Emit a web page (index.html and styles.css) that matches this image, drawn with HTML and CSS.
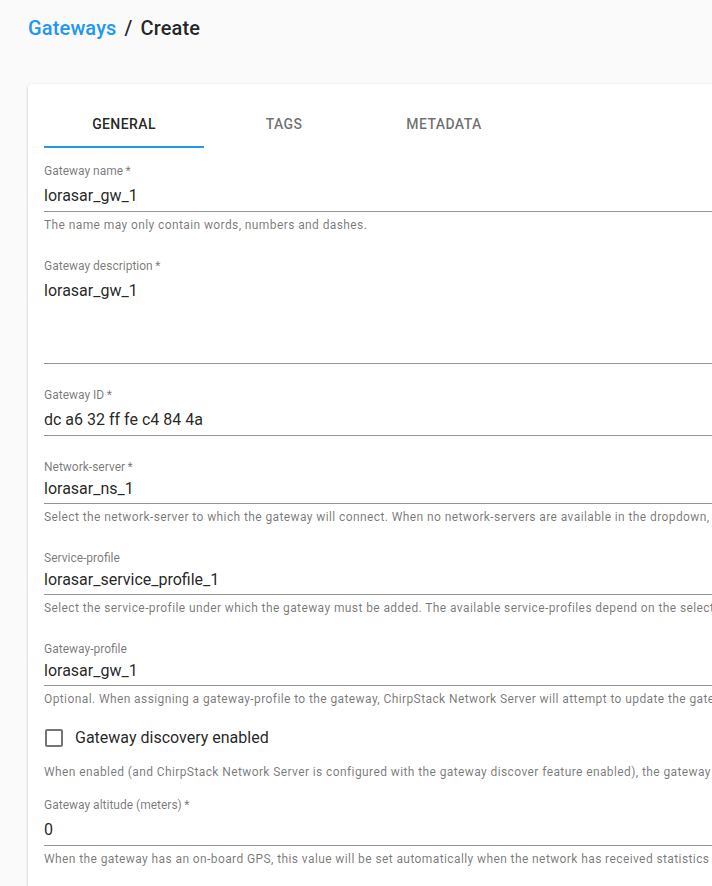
FILE: index.html
```html
<!DOCTYPE html>
<html lang="en">
<head>
<meta charset="utf-8">
<title>Gateways / Create</title>
<link rel="stylesheet" href="styles.css">
</head>
<body>
<div class="page">
  <h1 class="crumbs"><a class="crumb-link" href="#">Gateways</a><span class="sep">/</span><span>Create</span></h1>
  <div class="card">
    <div class="tabs">
      <div class="tab active">General</div>
      <div class="tab">Tags</div>
      <div class="tab">Metadata</div>
    </div>
    <form class="form">
      <div class="field">
        <label class="label">Gateway name&thinsp;*</label>
        <div class="input">lorasar_gw_1</div>
        <p class="helper">The name may only contain words, numbers and dashes.</p>
      </div>
      <div class="field">
        <label class="label">Gateway description&thinsp;*</label>
        <div class="input multi">lorasar_gw_1</div>
      </div>
      <div class="field">
        <label class="label">Gateway ID&thinsp;*</label>
        <div class="input">dc a6 32 ff fe c4 84 4a</div>
      </div>
      <div class="field">
        <label class="label">Network-server&thinsp;*</label>
        <div class="input select">lorasar_ns_1</div>
        <p class="helper">Select the network-server to which the gateway will connect. When no network-servers are available in the dropdown, make sure a service-profile exists for this organization.</p>
      </div>
      <div class="field">
        <label class="label">Service-profile</label>
        <div class="input select">lorasar_service_profile_1</div>
        <p class="helper">Select the service-profile under which the gateway must be added. The available service-profiles depend on the selected network-server, which must be selected first.</p>
      </div>
      <div class="field">
        <label class="label">Gateway-profile</label>
        <div class="input select">lorasar_gw_1</div>
        <p class="helper">Optional. When assigning a gateway-profile to the gateway, ChirpStack Network Server will attempt to update the gateway according to the gateway-profile. Note that this does require a gateway with ChirpStack Concentratord.</p>
      </div>
      <div class="check-group">
        <label class="check-row">
          <span class="check-icon"><svg viewBox="0 0 24 24" width="24" height="24"><path d="M19 5v14H5V5h14m0-2H5c-1.11 0-2 .9-2 2v14c0 1.1.89 2 2 2h14c1.1 0 2-.9 2-2V5c0-1.1-.9-2-2-2z"/></svg></span>
          <span class="check-label">Gateway discovery enabled</span>
        </label>
        <p class="helper">When enabled (and ChirpStack Network Server is configured with the gateway discover feature enabled), the gateway will send out periodical pings to test its coverage by other gateways in the same network.</p>
      </div>
      <div class="field">
        <label class="label">Gateway altitude (meters)&thinsp;*</label>
        <div class="input">0</div>
        <p class="helper">When the gateway has an on-board GPS, this value will be set automatically when the network has received statistics from the gateway.</p>
      </div>
    </form>
  </div>
</div>
</body>
</html>
```
FILE: styles.css
```css
html, body {
  margin: 0;
  padding: 0;
  overflow: hidden;
  background: #fafafa;
}
body {
  font-family: Roboto, "Noto Sans", sans-serif;
  color: rgba(0, 0, 0, 0.87);
}
.page {
  padding: 12px 0 0 28px;
}
.crumbs {
  margin: 0;
  font-size: 20px;
  font-weight: 500;
  line-height: 32px;
  letter-spacing: 0.0075em;
  color: rgba(0, 0, 0, 0.87);
}
.crumb-link {
  color: #2196f3;
  text-decoration: none;
}
.sep {
  margin: 0 8px;
}
.card {
  margin-top: 40px;
  width: 1100px;
  background: #fff;
  border-radius: 4px;
  box-shadow: 0 1px 3px 0 rgba(0,0,0,0.2), 0 1px 1px 0 rgba(0,0,0,0.14), 0 2px 1px -1px rgba(0,0,0,0.12);
  padding: 16px;
}
.tabs {
  display: flex;
  height: 48px;
}
.tab {
  width: 160px;
  display: flex;
  align-items: center;
  justify-content: center;
  font-size: 14px;
  font-weight: 500;
  letter-spacing: 0.02857em;
  text-transform: uppercase;
  color: rgba(0, 0, 0, 0.58);
}
.tab.active {
  color: rgba(0, 0, 0, 0.87);
  box-shadow: inset 0 -2px 0 #2196f3;
}
.form {
  display: flex;
  flex-direction: column;
}
.field {
  margin: 16px 0 8px;
}
.label {
  display: block;
  height: 16px;
  font-size: 12px;
  line-height: 15px;
  color: rgba(0, 0, 0, 0.54);
}
.input {
  font-size: 16px;
  line-height: 19px;
  padding: 6px 0 6px;
  border-bottom: 1px solid rgba(0, 0, 0, 0.42);
  white-space: nowrap;
}
.input.multi {
  height: 76px;
}
.input.select {
  padding: 3px 0 5px;
}
.helper {
  margin: 3px 0 0;
  font-size: 12px;
  line-height: 20px;
  letter-spacing: 0.03333em;
  color: rgba(0, 0, 0, 0.54);
  white-space: nowrap;
}
.check-group {
  margin: 0;
}
.check-row {
  display: flex;
  align-items: center;
  height: 42px;
  margin-left: -11px;
}
.check-icon {
  padding: 9px;
  display: flex;
}
.check-icon svg {
  fill: rgba(0, 0, 0, 0.54);
}
.check-label {
  font-size: 16px;
  line-height: 24px;
}
```
